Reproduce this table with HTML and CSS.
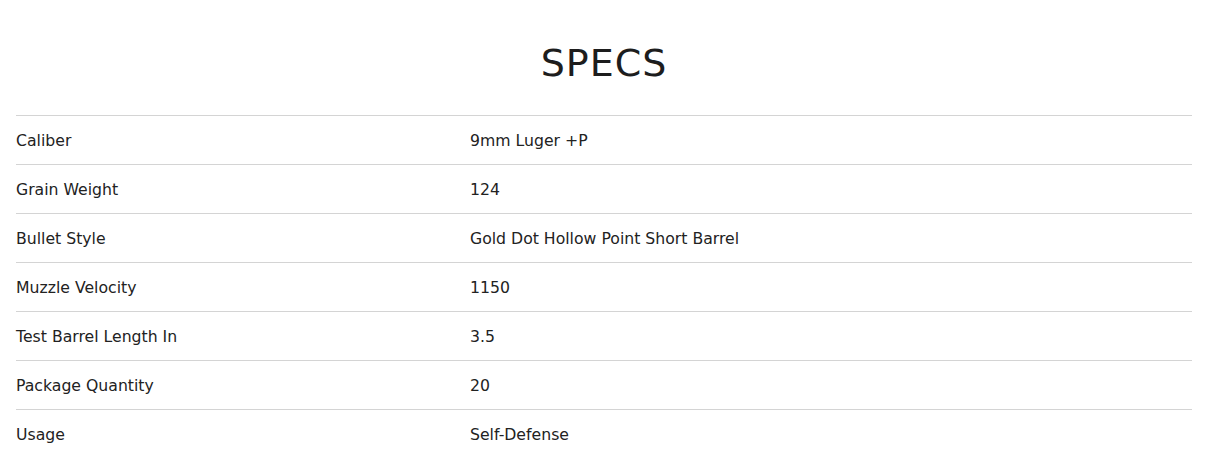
FILE: index.html
```html
<!DOCTYPE html>
<html>
<head>
<meta charset="utf-8">
<link rel="stylesheet" href="styles.css">
</head>
<body>
<section class="specs">
  <h2 class="specs-title">SPECS</h2>
  <div class="specs-table">
    <div class="row"><div class="label">Caliber</div><div class="value">9mm Luger +P</div></div>
    <div class="row"><div class="label">Grain Weight</div><div class="value">124</div></div>
    <div class="row"><div class="label">Bullet Style</div><div class="value">Gold Dot Hollow Point Short Barrel</div></div>
    <div class="row"><div class="label">Muzzle Velocity</div><div class="value">1150</div></div>
    <div class="row"><div class="label">Test Barrel Length In</div><div class="value">3.5</div></div>
    <div class="row"><div class="label">Package Quantity</div><div class="value">20</div></div>
    <div class="row"><div class="label">Usage</div><div class="value">Self-Defense</div></div>
  </div>
</section>
</body>
</html>
```
FILE: styles.css
```css
html, body {
  margin: 0;
  padding: 0;
  background: #fff;
}
body {
  font-family: "DejaVu Sans", "Noto Sans", sans-serif;
  color: #222;
}
.specs {
  width: 1176px;
  margin-left: 16px;
}
.specs-title {
  margin: 0;
  padding: 41px 0 30px;
  text-align: center;
  font-family: "DejaVu Sans", sans-serif;
  font-weight: normal;
  font-size: 38px;
  line-height: 44px;
  letter-spacing: 1px;
  color: #1d1d1d;
}
.specs-table {
  border-top: 1px solid #d4d4d4;
}
.row {
  display: grid;
  grid-template-columns: 454px 1fr;
  height: 49px;
  align-items: center;
  border-bottom: 1px solid #d4d4d4;
  box-sizing: border-box;
  font-size: 15.7px;
}
.row:last-child {
  border-bottom: none;
}
```
